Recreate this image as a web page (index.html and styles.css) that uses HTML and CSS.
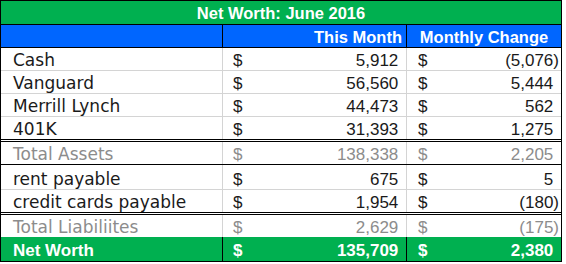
FILE: index.html
```html
<!DOCTYPE html>
<html>
<head>
<meta charset="utf-8">
<link rel="stylesheet" href="styles.css">
</head>
<body>
<div class="sheet">
  <div class="title">Net Worth: June 2016</div>
  <div class="row head">
    <div class="c1"></div>
    <div class="c2 hr">This Month</div>
    <div class="c3 hc">Monthly Change</div>
  </div>
  <div class="row">
    <div class="c1">Cash</div>
    <div class="c2 amt"><span>$</span><span class="num">5,912<i>)</i></span></div>
    <div class="c3 amt"><span>$</span><span class="num">(5,076)</span></div>
  </div>
  <div class="row">
    <div class="c1">Vanguard</div>
    <div class="c2 amt"><span>$</span><span class="num">56,560<i>)</i></span></div>
    <div class="c3 amt"><span>$</span><span class="num">5,444<i>)</i></span></div>
  </div>
  <div class="row">
    <div class="c1">Merrill Lynch</div>
    <div class="c2 amt"><span>$</span><span class="num">44,473<i>)</i></span></div>
    <div class="c3 amt"><span>$</span><span class="num">562<i>)</i></span></div>
  </div>
  <div class="row dbl">
    <div class="c1">401K</div>
    <div class="c2 amt"><span>$</span><span class="num">31,393<i>)</i></span></div>
    <div class="c3 amt"><span>$</span><span class="num">1,275<i>)</i></span></div>
  </div>
  <div class="row total blk">
    <div class="c1">Total Assets</div>
    <div class="c2 amt"><span>$</span><span class="num">138,338<i>)</i></span></div>
    <div class="c3 amt"><span>$</span><span class="num">2,205<i>)</i></span></div>
  </div>
  <div class="row rent">
    <div class="c1">rent payable</div>
    <div class="c2 amt"><span>$</span><span class="num">675<i>)</i></span></div>
    <div class="c3 amt"><span>$</span><span class="num">5<i>)</i></span></div>
  </div>
  <div class="row dbl">
    <div class="c1">credit cards payable</div>
    <div class="c2 amt"><span>$</span><span class="num">1,954<i>)</i></span></div>
    <div class="c3 amt"><span>$</span><span class="num">(180)</span></div>
  </div>
  <div class="row total nob">
    <div class="c1">Total Liabiliites</div>
    <div class="c2 amt"><span>$</span><span class="num">2,629<i>)</i></span></div>
    <div class="c3 amt"><span>$</span><span class="num">(175)</span></div>
  </div>
  <div class="row net">
    <div class="c1">Net Worth</div>
    <div class="c2 amt"><span>$</span><span class="num">135,709<i>)</i></span></div>
    <div class="c3 amt"><span>$</span><span class="num">2,380<i>)</i></span></div>
  </div>
</div>
</body>
</html>
```
FILE: styles.css
```css
html, body {
  margin: 0;
  padding: 0;
  background: #ffffff;
}
.sheet {
  width: 560px;
  border: 1px solid #000;
  font-family: "DejaVu Sans", sans-serif;
  font-size: 17px;
  color: #1a1a1a;
}
.title {
  height: 23px;
  line-height: 24px;
  background: #00b050;
  color: #fff;
  font-family: "Liberation Sans", Arial, sans-serif;
  font-weight: bold;
  font-size: 16.5px;
  text-align: center;
  border-bottom: 1px solid #000;
}
.row {
  display: grid;
  grid-template-columns: 221px 184px 155px;
  height: 22px;
  border-bottom: 1px solid #d4d4d4;
}
.row > div {
  display: flex;
  align-items: flex-end;
  height: 100%;
  box-sizing: border-box;
  padding-bottom: 1px;
  line-height: 17px;
  white-space: nowrap;
}
.row > .c1 {
  padding-left: 12px;
}
.c2, .c3 {
  border-left: 1px solid #d4d4d4;
}
.row > .amt {
  justify-content: space-between;
  padding-left: 10px;
  padding-right: 2px;
  font-family: "Liberation Sans", Arial, sans-serif;
  font-size: 17px;
}
.row > .c3.amt {
  padding-left: 11px;
}
.num i {
  font-style: normal;
  visibility: hidden;
}
.head {
  background: #0066ff;
  color: #fff;
  font-family: "Liberation Sans", Arial, sans-serif;
  font-weight: bold;
  font-size: 16.5px;
  border-bottom-color: #000;
}
.head .c2, .head .c3 {
  border-left-color: #000;
}
.row > .hr {
  justify-content: flex-end;
  padding-right: 4px;
}
.row > .hc {
  justify-content: center;
}
.dbl {
  border-bottom: 3px double #000;
}
.blk {
  border-bottom-color: #000;
}
.rent {
  height: 24px;
}
.nob {
  border-bottom: none;
}
.total {
  color: #8c8c8c;
}
.net {
  height: 24px;
  background: #00b050;
  color: #fff;
  font-family: "Liberation Sans", Arial, sans-serif;
  font-weight: bold;
  font-size: 17px;
  border-bottom: none;
}
.net .c2, .net .c3 {
  border-left-color: #000;
}
.net > div {
  padding-bottom: 2px;
}
```
